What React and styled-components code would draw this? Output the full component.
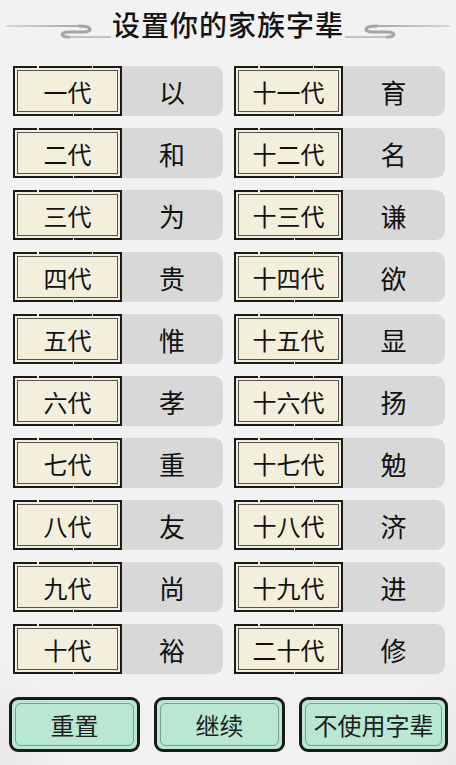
import React from "react";
import styled, { createGlobalStyle } from "styled-components";

const Global = createGlobalStyle`
  html, body { margin: 0; padding: 0; }
  body { background: #f2f2f2; font-family: "Noto Sans CJK SC", "Noto Sans", sans-serif; }
`;

const Page = styled.div`
  width: 456px;
  height: 765px;
  overflow: hidden;
  box-sizing: border-box;
  display: flex;
  flex-direction: column;
  background:
    radial-gradient(ellipse 130px 170px at -20px 765px, rgba(0,0,0,0.06), rgba(0,0,0,0) 70%),
    radial-gradient(ellipse 130px 170px at 476px 765px, rgba(0,0,0,0.05), rgba(0,0,0,0) 70%),
    #f2f2f2;
`;

const TitleBar = styled.div`
  height: 50px;
  display: flex;
  align-items: flex-start;
  justify-content: center;
  padding-top: 6px;
  box-sizing: border-box;
`;

const TitleText = styled.h1`
  margin: 0 1px;
  font-size: 28px;
  line-height: 36px;
  font-weight: 500;
  color: #141414;
  letter-spacing: 1px;
`;

const Ornament = styled.svg`
  width: 106px;
  height: 18px;
  margin-top: 16px;
  transform: ${(p) => (p.$flip ? "scaleX(-1)" : "none")};
`;

const Grid = styled.div`
  display: grid;
  grid-template-columns: 210px 211px;
  column-gap: 11px;
  row-gap: 12px;
  padding: 16px 11px 0 13px;
`;

const Row = styled.div`
  height: 50px;
  display: flex;
`;

const Label = styled.div`
  width: 109px;
  flex: none;
  box-sizing: border-box;
  border: 2px solid #1b1b1b;
  background: #f4eedc;
  box-shadow: inset 0 0 0 2px #f4eedc, inset 0 0 0 3px #55534c;
  display: flex;
  align-items: center;
  justify-content: center;
  font-size: 24px;
  color: #111;
  position: relative;
  z-index: 1;
  &::before {
    content: "";
    position: absolute;
    left: 0;
    right: 0;
    top: -2px;
    height: 2px;
    background: linear-gradient(to right,
      transparent 21%, #f4eedc 21%, #f4eedc 22.5%, transparent 22.5%,
      transparent 73%, #f4eedc 73%, #f4eedc 74.5%, transparent 74.5%);
  }
  &::after {
    content: "";
    position: absolute;
    left: 0;
    right: 0;
    bottom: -2px;
    height: 2px;
    background: linear-gradient(to right,
      transparent 55%, #f4eedc 55%, #f4eedc 56.5%, transparent 56.5%);
  }
`;

const Value = styled.div`
  flex: 1;
  background: #d8d8d8;
  border-radius: 0 9px 9px 0;
  display: flex;
  align-items: center;
  justify-content: center;
  font-size: 26px;
  color: #111;
  margin-left: -1px;
`;

const Actions = styled.div`
  display: flex;
  gap: 14px;
  padding: 23px 0 0 9px;
`;

const Button = styled.button`
  width: ${(p) => p.$w}px;
  height: 55px;
  box-sizing: border-box;
  border: 3px solid #1a1a1a;
  border-radius: 9px;
  background: #b8e8d1;
  font-family: "Noto Sans CJK SC", "Noto Sans", sans-serif;
  font-size: 24px;
  color: #1e1e1e;
  position: relative;
  padding: 0;
  display: flex;
  align-items: center;
  justify-content: center;
  &::before {
    content: "";
    position: absolute;
    inset: 3px;
    border: 1px solid rgba(40, 70, 60, 0.45);
    border-radius: 6px;
    pointer-events: none;
  }
`;

const left = [
  ["一代", "以"], ["二代", "和"], ["三代", "为"], ["四代", "贵"], ["五代", "惟"],
  ["六代", "孝"], ["七代", "重"], ["八代", "友"], ["九代", "尚"], ["十代", "裕"],
];
const right = [
  ["十一代", "育"], ["十二代", "名"], ["十三代", "谦"], ["十四代", "欲"], ["十五代", "显"],
  ["十六代", "扬"], ["十七代", "勉"], ["十八代", "济"], ["十九代", "进"], ["二十代", "修"],
];

const OrnamentSvg = ({ flip }) => {
  const id = flip ? "og2" : "og1";
  return (
    <Ornament $flip={flip} viewBox="0 0 106 18">
      <defs>
        <linearGradient id={id} gradientUnits="userSpaceOnUse" x1="0" y1="0" x2="80" y2="0">
          <stop offset="0" stopColor="#c8c8c8" stopOpacity="0.6" />
          <stop offset="0.6" stopColor="#b6b6b6" />
          <stop offset="1" stopColor="#aaaaaa" />
        </linearGradient>
      </defs>
      <path d="M2 4 L76 4" fill="none" stroke={`url(#${id})`} strokeWidth="1.8" strokeLinecap="round" />
      <path
        d="M74 4 C88 4 88 10 78 10 L63 10 C55 10 55 15 64 15"
        fill="none"
        stroke="#a4a4a4"
        strokeWidth="3"
        strokeLinecap="round"
      />
      <path d="M62 15 L106 15" fill="none" stroke="#b4b4b4" strokeWidth="1.6" strokeLinecap="round" />
    </Ornament>
  );
};

export default function App() {
  const rows = [];
  for (let i = 0; i < 10; i++) {
    rows.push(
      <Row key={"l" + i}>
        <Label>{left[i][0]}</Label>
        <Value>{left[i][1]}</Value>
      </Row>,
      <Row key={"r" + i}>
        <Label>{right[i][0]}</Label>
        <Value>{right[i][1]}</Value>
      </Row>
    );
  }
  return (
    <>
      <Global />
      <Page>
        <TitleBar>
          <OrnamentSvg />
          <TitleText>设置你的家族字辈</TitleText>
          <OrnamentSvg flip />
        </TitleBar>
        <Grid>{rows}</Grid>
        <Actions>
          <Button $w={131}>重置</Button>
          <Button $w={131}>继续</Button>
          <Button $w={149}>不使用字辈</Button>
        </Actions>
      </Page>
    </>
  );
}
